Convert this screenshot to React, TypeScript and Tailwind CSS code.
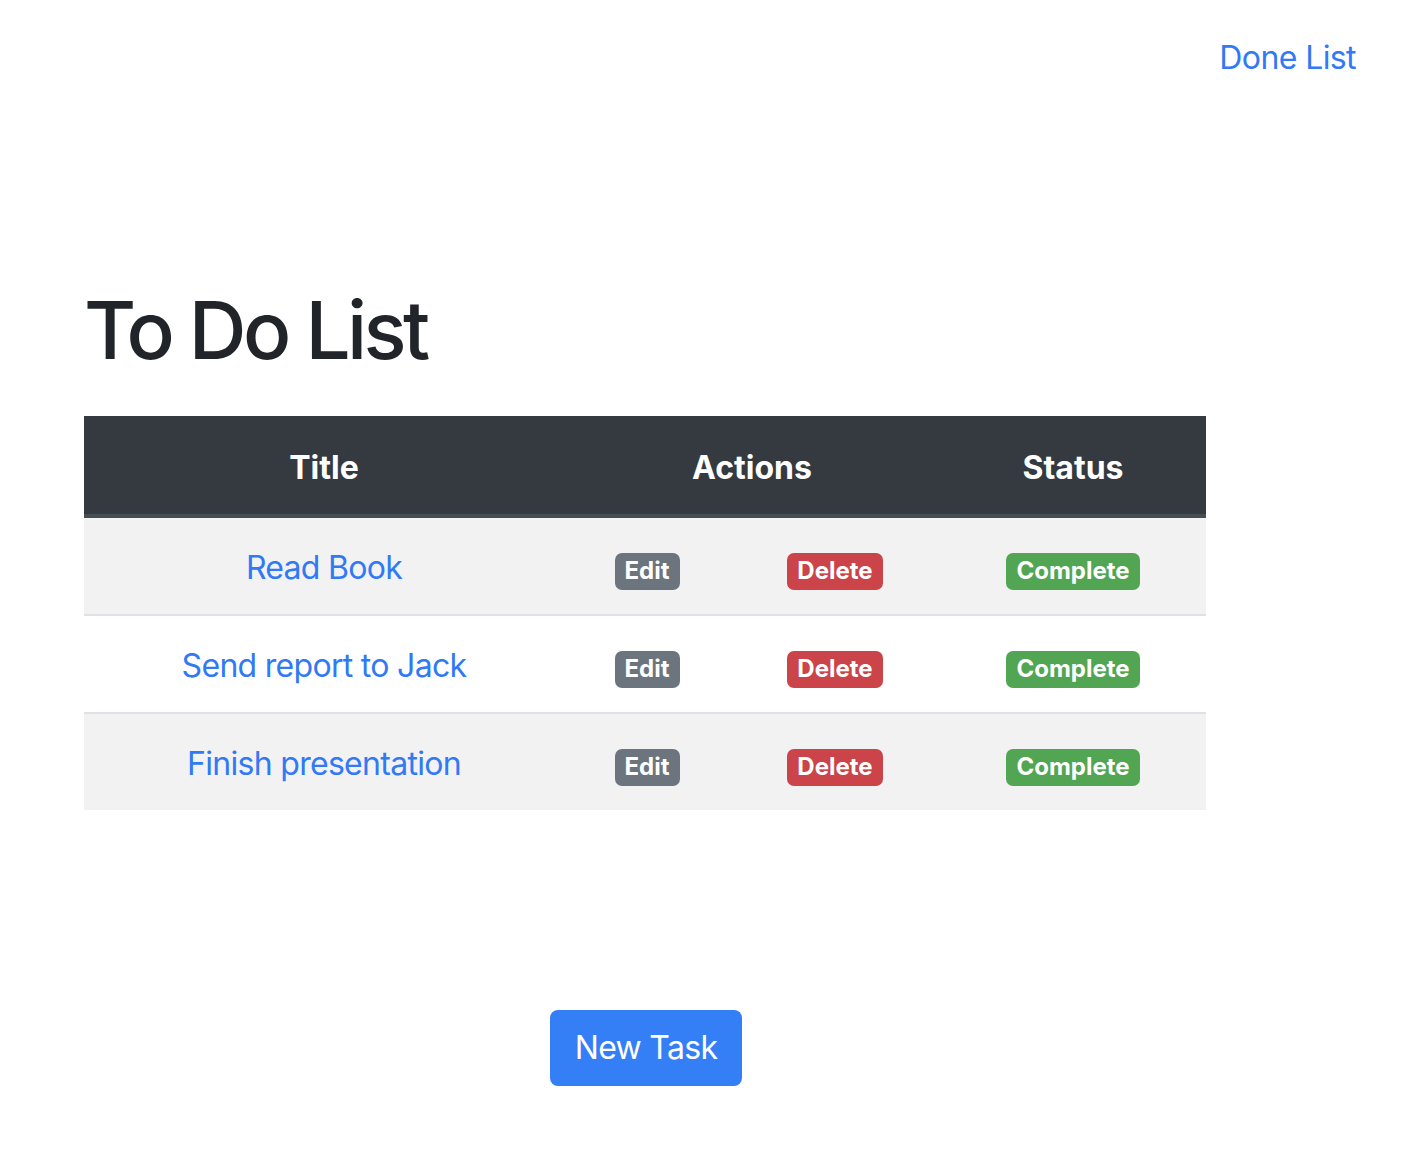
import React from "react";

const rows = ["Read Book", "Send report to Jack", "Finish presentation"];

function Badge({ bg, children }: { bg: string; children: React.ReactNode }) {
  return (
    <span className={`inline-block rounded-[7px] ${bg} px-[10px] pt-[6px] pb-[7px] text-[24px] leading-[24px] font-bold text-white`}>
      {children}
    </span>
  );
}

export default function App() {
  return (
    <div className="min-h-[1154px] bg-white text-[#212529]" style={{ fontFamily: "Inter, 'Liberation Sans', sans-serif" }}>
      <div className="flex justify-end pt-[34px] pr-[64px]">
        <a href="#" className="text-[32px] leading-[48px] tracking-[-0.6px] text-[#3179f5]">Done List</a>
      </div>
      <div className="pl-[84px]">
        <h1 className="mt-[200px] text-[80px] leading-[96px] font-medium tracking-[-3.6px]">To Do List</h1>
        <table className="mt-[38px] w-[1122px] border-separate border-spacing-0 text-[32px] leading-[48px]">
          <thead>
            <tr className="bg-[#343a40] text-white">
              <th className="w-[480px] h-[102px] pt-[5px] border-b-4 border-[#454d55] font-bold text-center">Title</th>
              <th colSpan={2} className="w-[376px] pt-[5px] border-b-4 border-[#454d55] font-bold text-center">Actions</th>
              <th className="pt-[5px] border-b-4 border-[#454d55] font-bold text-center">Status</th>
            </tr>
          </thead>
          <tbody>
            {rows.map((r, i) => {
              const b = i > 0 ? "h-[98px] border-t-2 border-[#dee2e6]" : "h-[96px]";
              return (
                <tr key={r} className={i % 2 === 0 ? "bg-[#f2f2f2]" : "bg-white"}>
                  <td className={`${b} pt-[3px] text-center`}>
                    <a href="#" className="tracking-[-0.7px] text-[#3179f5]">{r}</a>
                  </td>
                  <td className={`${b} pt-[3px] w-[166px] text-center`}>
                    <Badge bg="bg-[#6c757d]">Edit</Badge>
                  </td>
                  <td className={`${b} pt-[3px] w-[210px] text-center`}>
                    <Badge bg="bg-[#cb444a]">Delete</Badge>
                  </td>
                  <td className={`${b} pt-[3px] text-center`}>
                    <Badge bg="bg-[#52a552]">Complete</Badge>
                  </td>
                </tr>
              );
            })}
          </tbody>
        </table>
        <div className="w-[1122px] flex justify-center mt-[200px]">
          <button className="ml-[2px] h-[76px] w-[192px] rounded-[8px] bg-[#347ef6] text-[32px] leading-[48px] tracking-[-0.7px] text-white">New Task</button>
        </div>
      </div>
    </div>
  );
}
